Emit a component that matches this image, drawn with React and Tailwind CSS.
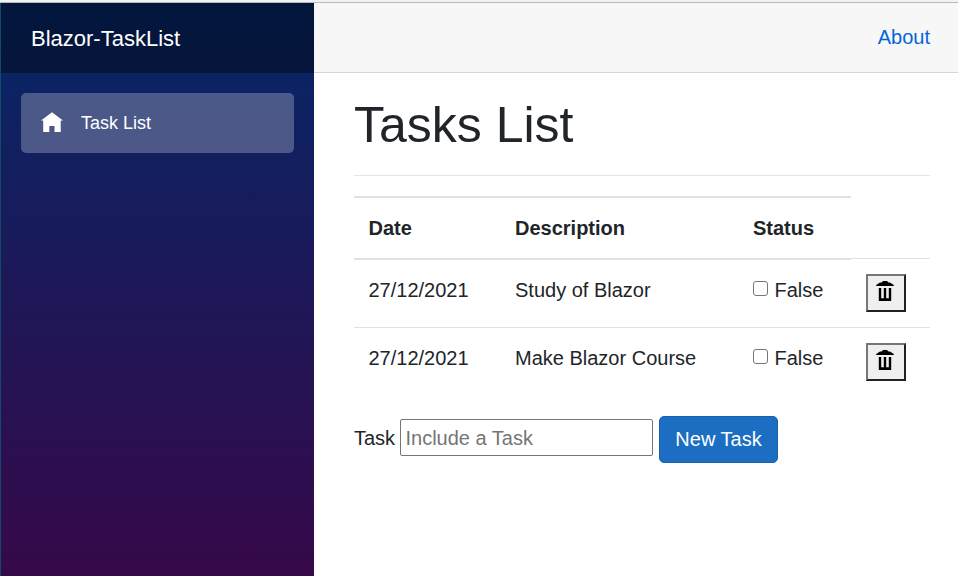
const tasks = [
  { date: '27/12/2021', description: 'Study of Blazor' },
  { date: '27/12/2021', description: 'Make Blazor Course' },
];

function HomeIcon() {
  return (
    <svg className="mb-[2px] h-[20px] w-[22px]" viewBox="0 0 22 20" fill="white">
      <path d="M11 0.3 L0 8.6 H2.2 V20 H8.3 V14 H13.5 V20 H19.7 V8.6 H22 Z" />
    </svg>
  );
}

function TrashIcon() {
  return (
    <svg className="h-[20px] w-[18px]" viewBox="0 0 18 20" fill="black">
      <path d="M7 0 H11 L12.4 1.6 H14 L17.8 4 V5 H0.2 V4 L4 1.6 H5.6 Z" />
      <path d="M2.8 7 H5.2 V17.2 H7.8 V7 H10.2 V17.2 H12.8 V7 H15.2 V20 H2.8 Z" />
    </svg>
  );
}

function Sidebar() {
  return (
    <aside className="flex w-[314px] shrink-0 flex-col border-l border-[#124b66] bg-[linear-gradient(180deg,#052767_0%,#3a0647_620px)] text-white">
      <div className="flex h-[70px] items-center bg-black/40 pt-[2px] pl-[30px] text-[22px]">
        Blazor-TaskList
      </div>
      <nav className="px-5 pt-5">
        <a className="flex h-[60px] items-center rounded-[5px] bg-white/25 pl-5 text-[18px]">
          <HomeIcon />
          <span className="pl-[18px]">Task List</span>
        </a>
      </nav>
    </aside>
  );
}

function TaskRow({ task, first }) {
  return (
    <div className={first ? 'flex h-[67px]' : 'flex h-[69px] border-t border-[#dee2e6]'}>
      <div className="w-[146px] pt-[15px] pl-[14.5px]">{task.date}</div>
      <div className="w-[238px] pt-[15px] pl-[15px]">{task.description}</div>
      <div className="flex w-[113px] items-start pt-[15px] pl-[15px]">
        <input
          type="checkbox"
          className="mt-[6px] mr-[6.5px] h-[15px] w-[15px] shrink-0 appearance-none rounded-[3px] border border-[#767676] bg-white"
        />
        <span>False</span>
      </div>
      <div className={first ? 'pt-[14px] pl-[15px]' : 'pt-[15px] pl-[15px]'}>
        <button className="flex h-[38px] w-[40px] items-start border-2 border-t-[#767676] border-r-[#212121] border-b-[#212121] border-l-[#767676] bg-[#efefef] pt-[5px] pl-[8px]">
          <TrashIcon />
        </button>
      </div>
    </div>
  );
}

function TaskTable() {
  return (
    <div className="mt-5 w-[576px]">
      <div className="flex h-[64px] items-start font-bold">
        <div className="flex h-[64px] w-[497px] border-y-2 border-[#dee2e6]">
          <div className="w-[146px] pt-[15px] pl-[14.5px]">Date</div>
          <div className="w-[238px] pt-[15px] pl-[15px]">Description</div>
          <div className="pt-[15px] pl-[15px]">Status</div>
        </div>
        <div className="h-[63px] flex-1 border-b border-[#dee2e6]" />
      </div>
      {tasks.map((task, i) => (
        <TaskRow key={task.description} task={task} first={i === 0} />
      ))}
    </div>
  );
}

export default function App() {
  return (
    <div className="flex h-[576px] w-[958px] flex-col overflow-hidden bg-white font-['Liberation_Sans',Arial,sans-serif] text-[20px] leading-[30px] text-[#212529]">
      <div className="h-[3px] shrink-0 border-b border-[#b9b9b9] bg-[#f2f2f2]" />
      <div className="flex min-h-0 flex-1">
        <Sidebar />
        <div className="flex-1">
          <header className="flex h-[70px] items-center justify-end border-b border-[#d6d5d5] bg-[#f7f7f7] pr-7 pb-[2px]">
            <a className="text-[#0366d6]">About</a>
          </header>
          <main className="pl-10">
            <h1 className="h-[102px] w-[576px] pt-[22px] text-[50px] leading-[60px]">Tasks List</h1>
            <div className="w-[576px] border-t border-[#e5e5e5]" />
            <TaskTable />
            <div className="mt-5 flex items-start">
              <label className="w-[40px] pt-[7px] whitespace-nowrap">Task</label>
              <input
                placeholder="Include a Task"
                className="mt-[3px] ml-[6px] h-[37px] w-[253px] rounded-[2px] border border-[#767676] bg-white px-[4.5px] pt-[2px] placeholder:text-[#757575]"
              />
              <button className="ml-[6px] h-[47px] w-[119px] rounded-[5px] border border-[#1861ac] bg-[#1b6ec2] pb-[2px] text-white">
                New Task
              </button>
            </div>
          </main>
        </div>
      </div>
    </div>
  );
}
